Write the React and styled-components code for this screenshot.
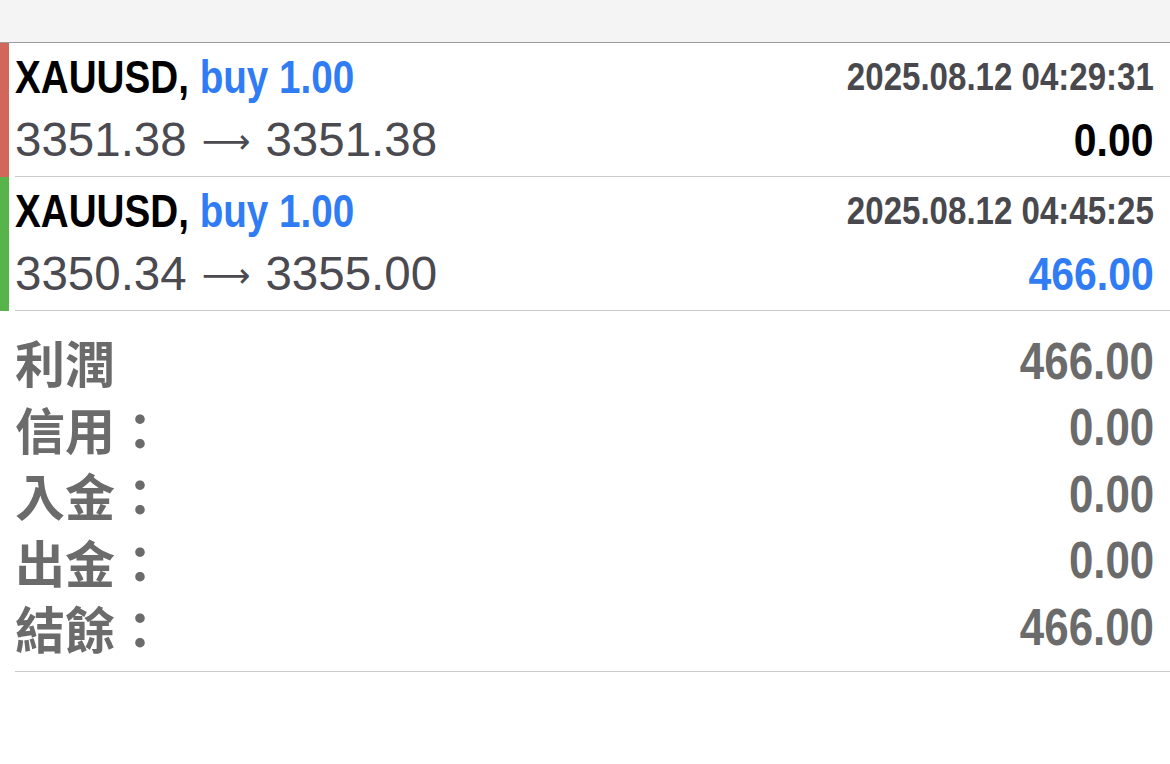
import styled, { createGlobalStyle } from 'styled-components';

const GlobalStyle = createGlobalStyle`
  html, body {
    margin: 0;
    padding: 0;
    background: #ffffff;
  }
  body {
    font-family: "Liberation Sans", Arial, sans-serif;
  }
`;

// the app uses a condensed bold face; squeeze Liberation Sans Bold to match
const Condensed = styled.span`
  display: inline-block;
  font-family: "Liberation Sans", Arial, sans-serif;
  font-weight: 700;
  white-space: nowrap;
  transform: scaleX(${(p) => p.$scale || 0.86});
  transform-origin: ${(p) => (p.$right ? 'right' : 'left')} center;
`;

const Page = styled.div`
  width: 1170px;
  height: 764px;
  background: #fff;
  overflow: hidden;
`;

const TopBar = styled.div`
  height: 42px;
  background: #f4f4f4;
  border-bottom: 1px solid #9c9c9c;
`;

const Deal = styled.div`
  display: flex;
  height: 134px;
`;

const Stripe = styled.div`
  width: 9px;
  flex: none;
  background: ${(p) => p.color};
`;

const DealBody = styled.div`
  flex: 1;
  margin-left: 6px;
  padding-right: 16px;
  border-bottom: 1px solid #cacaca;
  display: grid;
  grid-template-columns: 1fr auto;
  grid-template-rows: 66px 62px;
  align-items: center;
`;

const Symbol = styled.div`
  font-size: 46px;
  color: #000;
  line-height: 1;
  padding-top: 2px;
`;

const Side = styled.span`
  color: #2f7cf5;
`;

const Time = styled.div`
  font-size: 38px;
  color: #48484d;
  text-align: right;
  line-height: 1;
  padding-top: 2px;
`;

const Prices = styled.div`
  font-size: 47.5px;
  color: #4a4a50;
  line-height: 1;
  white-space: nowrap;
  display: flex;
  align-items: center;
`;

const Arrow = styled.span`
  font-family: "DejaVu Sans", sans-serif;
  font-size: 34px;
  margin: 2px 15px 0 15px;
`;

const Profit = styled.div`
  font-size: 46px;
  color: ${(p) => (p.$positive ? '#2f7cf5' : '#000')};
  text-align: right;
  line-height: 1;
`;

const Summary = styled.div`
  margin-left: 15px;
  padding: 17px 16px 10px 0;
  border-bottom: 1px solid #cacaca;
`;

const SummaryRow = styled.div`
  display: flex;
  justify-content: space-between;
  align-items: center;
  height: 66.5px;
  color: #6b6b6b;
`;

const Label = styled.div`
  font-family: "Noto Sans CJK TC", "Noto Sans CJK SC", sans-serif;
  font-weight: 700;
  font-size: 50px;
  line-height: 1;
`;

const Amount = styled.div`
  font-size: 51px;
  line-height: 1;
`;

const deals = [
  { color: '#d0675a', time: '2025.08.12 04:29:31', open: '3351.38', close: '3351.38', profit: '0.00', positive: false },
  { color: '#56b44b', time: '2025.08.12 04:45:25', open: '3350.34', close: '3355.00', profit: '466.00', positive: true },
];

const totals = [
  ['利潤', '466.00'],
  ['信用：', '0.00'],
  ['入金：', '0.00'],
  ['出金：', '0.00'],
  ['結餘：', '466.00'],
];

export default function App() {
  return (
    <Page>
      <GlobalStyle />
      <TopBar />
      {deals.map((d) => (
        <Deal key={d.time}>
          <Stripe color={d.color} />
          <DealBody>
            <Symbol>
              <Condensed $scale={0.84}>
                XAUUSD, <Side>buy 1.00</Side>
              </Condensed>
            </Symbol>
            <Time>
              <Condensed $right $scale={0.87}>{d.time}</Condensed>
            </Time>
            <Prices>
              {d.open}<Arrow>⟶</Arrow>{d.close}
            </Prices>
            <Profit $positive={d.positive}>
              <Condensed $right $scale={0.89}>{d.profit}</Condensed>
            </Profit>
          </DealBody>
        </Deal>
      ))}
      <Summary>
        {totals.map(([label, value]) => (
          <SummaryRow key={label}>
            <Label>{label}</Label>
            <Amount>
              <Condensed $right>{value}</Condensed>
            </Amount>
          </SummaryRow>
        ))}
      </Summary>
    </Page>
  );
}
